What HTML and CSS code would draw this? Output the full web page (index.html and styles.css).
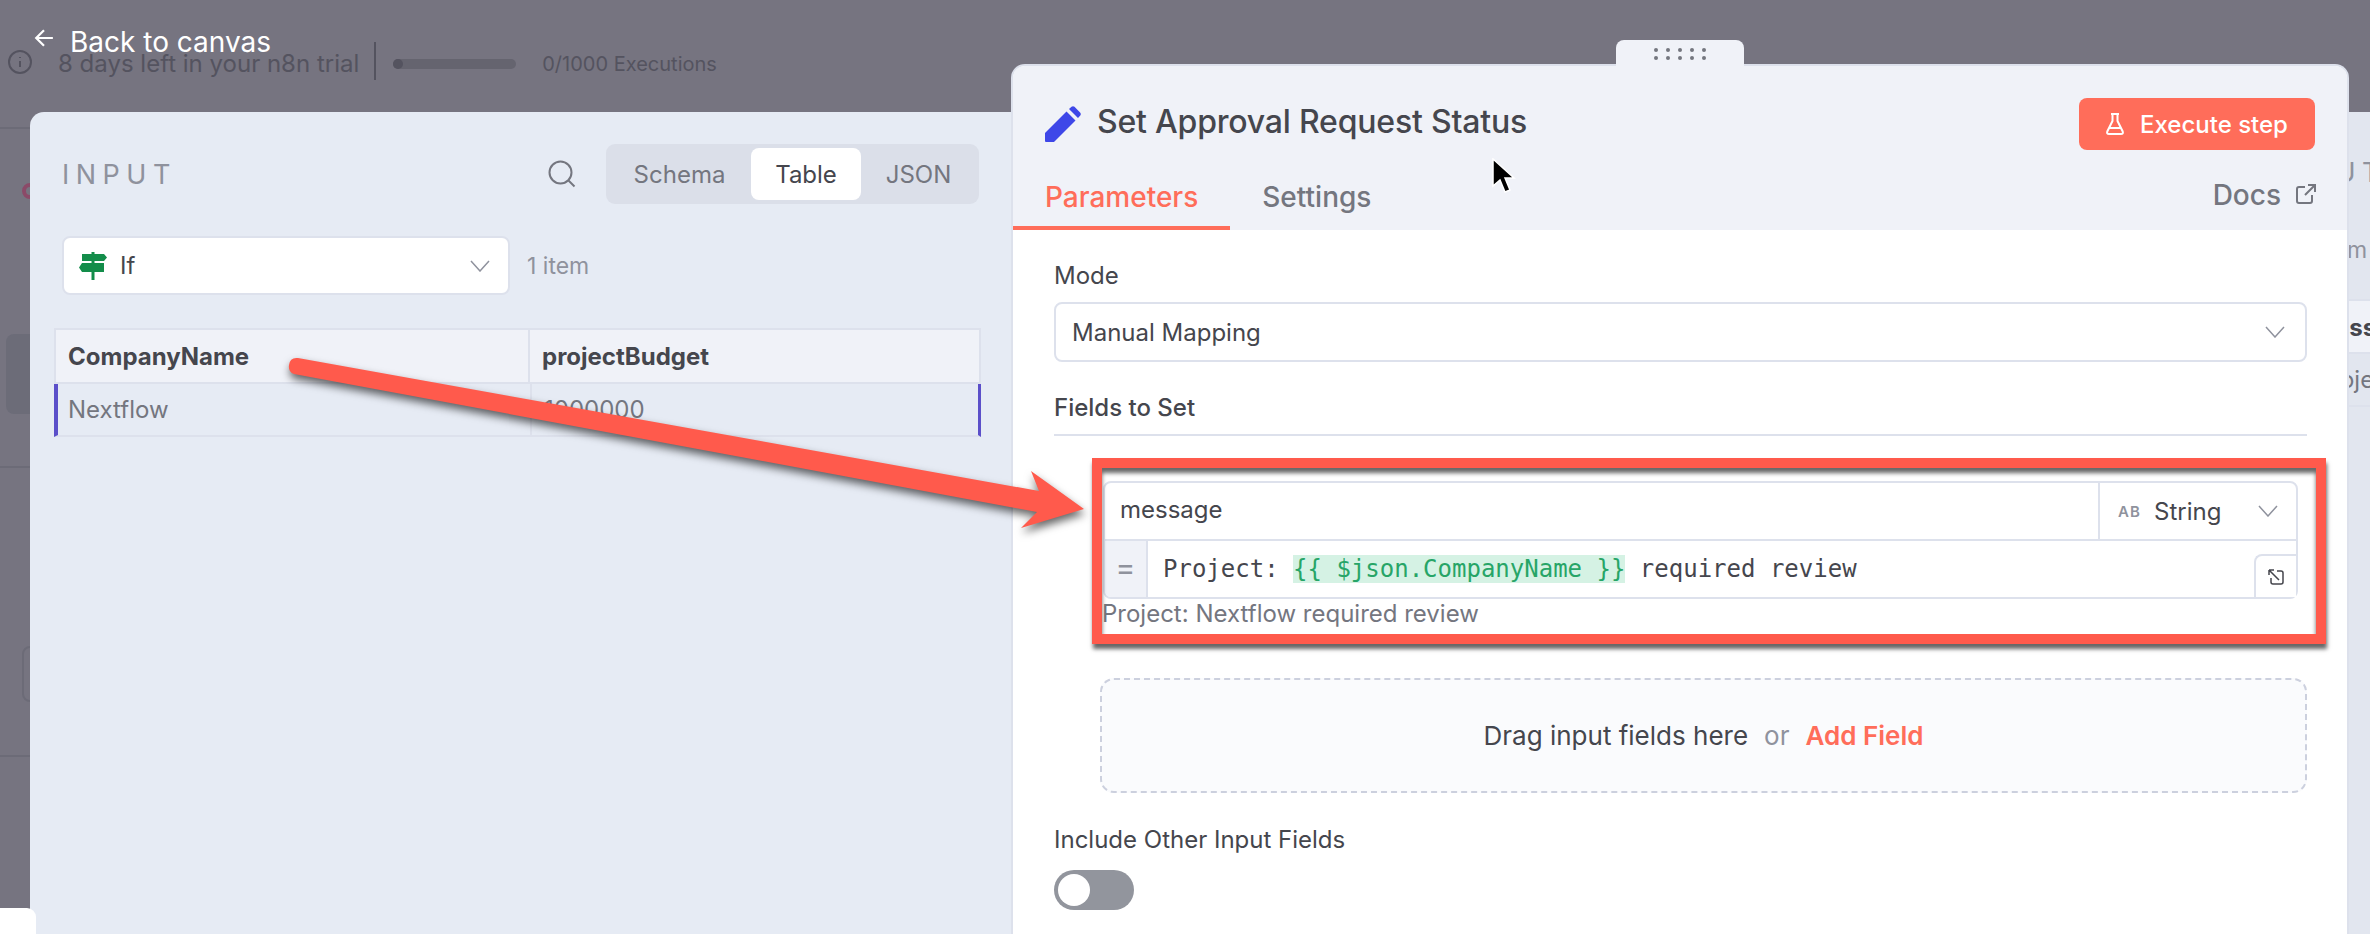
FILE: index.html
```html
<!DOCTYPE html>
<html lang="en">

    <head>
        <meta charset="UTF-8">
        <meta name="viewport" content="width=device-width, initial-scale=1.0">
        <title>Set Approval Request Status</title>
        <link rel="stylesheet" href="styles.css">
    </head>

    <body>
        <div class="page">
            <!-- dimmed editor behind the modal -->
            <div class="backdrop">
                <div class="trial-bar">
                    <svg class="info-icon" viewBox="0 0 24 24"><circle cx="12" cy="12" r="11"/><path d="M12 11v6M12 7v1"/></svg>
                    <span class="trial-text">8 days left in your n8n trial</span>
                    <span class="trial-sep"></span>
                    <span class="trial-progress"><span class="trial-progress-dot"></span></span>
                    <span class="trial-count">0/1000 Executions</span>
                </div>
                <span class="bg-ring"></span>
                <span class="bg-card"></span>
                <div class="bg-line bg-line-first"></div>
                <span class="bg-box"></span>
                <div class="bg-line bg-line-second"></div>
            </div>

            <div class="ndv">
                <a class="back-link" href="#">
                    <svg viewBox="0 0 18 18"><path d="M17 9H2M9 2 2 9l7 7"/></svg>
                    Back to canvas
                </a>

                <section class="input-panel">
                    <div class="input-head">
                        <span class="panel-title">INPUT</span>
                        <svg class="search-icon" viewBox="0 0 28 28"><circle cx="12.500" cy="12.500" r="11"/><path d="m20.500 20.500 6 6"/></svg>
                        <div class="mode-tabs">
                            <span class="mode-tab">Schema</span>
                            <span class="mode-tab active">Table</span>
                            <span class="mode-tab">JSON</span>
                        </div>
                    </div>
                    <div class="source-row">
                        <div class="source-select">
                            <svg class="if-icon" viewBox="0 0 28 28">
                                <path d="M12.500 0h3v2H25l3 3.500L25 9H3V2h9.500zM12.500 9h3v2H25v9H3l-3-4.500L3 11h9.500zM12.500 20h3v8h-3z"/>
                            </svg>
                            <span class="source-name">If</span>
                            <svg class="chevron" viewBox="0 0 20 12"><path d="m1 1 9 10 9-10"/></svg>
                        </div>
                        <span class="item-count">1 item</span>
                    </div>
                    <table class="data-table">
                        <thead>
                            <tr>
                                <th class="col-company">CompanyName</th>
                                <th>projectBudget</th>
                            </tr>
                        </thead>
                        <tbody>
                            <tr>
                                <td>Nextflow</td>
                                <td>1000000</td>
                            </tr>
                        </tbody>
                    </table>
                </section>

                <section class="main-panel">
                    <div class="drag-handle">
                        <span></span><span></span><span></span><span></span><span></span>
                        <span></span><span></span><span></span><span></span><span></span>
                    </div>
                    <header class="main-head">
                        <div class="title-row">
                            <svg class="pencil-icon" viewBox="0 0 36 36">
                                <path d="M0 27 21.500 5.500 30.500 14.500 9.500 35.500Q9 36 8 36H1Q0 36 0 35ZM24 3 26.500.700Q28 -.400 29.500.700L35.300 6.700Q36.300 8 35.300 9.500L33 12Z"/>
                            </svg>
                            <h1>Set Approval Request Status</h1>
                            <button class="execute-btn">
                                <svg viewBox="0 0 18 22"><path d="M5 1h8M6.500 1v7L1.300 18.500Q.500 21 3 21h12q2.500 0 1.700-2.500L11.500 8V1M3.500 15h11"/></svg>
                                Execute step
                            </button>
                        </div>
                        <nav class="main-tabs">
                            <a class="main-tab active" href="#">Parameters</a>
                            <a class="main-tab" href="#">Settings</a>
                            <a class="docs-link" href="#">
                                Docs
                                <svg viewBox="0 0 20 20"><path d="M9 3H3Q1 3 1 5v12q0 2 2 2h11q2 0 2-2v-6M9 11 19 1M12 1h7v7"/></svg>
                            </a>
                        </nav>
                    </header>

                    <div class="params">
                        <label class="param-label">Mode</label>
                        <div class="mode-select">
                            <span>Manual Mapping</span>
                            <svg class="chevron" viewBox="0 0 20 12"><path d="m1 1 9 10 9-10"/></svg>
                        </div>

                        <div class="fields-label">Fields to Set</div>

                        <div class="assignment">
                            <div class="assignment-box">
                                <div class="assignment-top">
                                    <span class="field-name">message</span>
                                    <div class="type-select">
                                        <span class="type-badge">AB</span>
                                        <span class="type-name">String</span>
                                        <svg class="chevron" viewBox="0 0 20 12"><path d="m1 1 9 10 9-10"/></svg>
                                    </div>
                                </div>
                                <div class="assignment-bottom">
                                    <span class="equals">=</span>
                                    <code class="expression">Project: <span class="expr-token">{{ $json.CompanyName }}</span> required review</code>
                                    <span class="expand-btn">
                                        <svg viewBox="0 0 16 16"><path d="M1 1l10 10M1 1v5M1 1h5M9 2h4q2 0 2 2v9q0 2-2 2H5q-2 0-2-2V9"/></svg>
                                    </span>
                                </div>
                            </div>
                            <div class="resolved">Project: Nextflow required review</div>
                            <div class="callout-frame"></div>
                        </div>

                        <div class="drop-zone">
                            <span class="drop-text">Drag input fields here</span>
                            <span class="drop-or">or</span>
                            <a class="add-field" href="#">Add Field</a>
                        </div>

                        <label class="param-label include-label">Include Other Input Fields</label>
                        <div class="toggle"><span class="toggle-knob"></span></div>
                    </div>
                </section>

                <section class="output-panel">
                    <span class="output-title">OUTPUT</span>
                    <span class="output-count">1 item</span>
                    <div class="output-head"><span>message</span></div>
                    <div class="output-row"><span>Project: Nextflow required review</span></div>
                </section>
            </div>

            <span class="corner-card"></span>

            <!-- annotation drawn on top of the screenshot -->
            <svg class="callout-arrow" viewBox="0 0 2370 934">
                <path d="M298 358 1039 491 1031 471 1084 509 1021 528 1037 512 294 374Q288 372 289 365 290 357 298 358Z"/>
            </svg>

            <svg class="mouse-cursor" viewBox="0 0 26 36">
                <path d="M2 1v27l7-6 5 12 5-2-5-12h9z"/>
            </svg>
        </div>
    </body>

</html>
```

FILE: styles.css
```css
:root {
    --coral: #ff6d5a;
    --callout: #ff5a4c;
    --text-dark: #45464d;
    --text-mid: #74767f;
    --text-light: #8f929d;
    --line: #dde1ec;
    --panel-head: #f0f2f8;
    --panel-input: #e6ebf4;
    --panel-output: #e2e6ef;
    --dim: #767480;
    --dim-text: #54535f;
    --dim-line: #6c6b77;
}

*,
*::before,
*::after {
    box-sizing: border-box;
}

body {
    margin: 0;
    font-family: 'Inter', 'Liberation Sans', sans-serif;
    color: var(--text-dark);
}

a {
    text-decoration: none;
}

.page {
    position: relative;
    width: 2370px;
    height: 934px;
    overflow: hidden;
    background: var(--dim);
}

/* Backdrop */
.backdrop {
    position: absolute;
    inset: 0;
    display: flex;
    flex-direction: column;
}

.trial-bar {
    display: flex;
    align-items: flex-start;
    height: 129px;
    padding: 42px 0 1px 8px;
    border-bottom: 2px solid var(--dim-line);
    color: var(--dim-text);
}

.info-icon {
    width: 24px;
    height: 24px;
    margin-top: 8px;
    fill: none;
    stroke: var(--dim-text);
    stroke-width: 2;
}

.trial-text {
    margin-left: 26px;
    margin-top: 7px;
    font-size: 24px;
    line-height: 30px;
    white-space: nowrap;
}

.trial-sep {
    width: 2px;
    height: 38px;
    margin-left: 15px;
    background: var(--dim-text);
}

.trial-progress {
    display: block;
    width: 123px;
    height: 10px;
    margin: 17px 0 0 17px;
    background: #65646f;
    border-radius: 5px;
}

.trial-progress-dot {
    display: block;
    width: 10px;
    height: 10px;
    border-radius: 50%;
    background: var(--dim-text);
}

.trial-count {
    margin-left: 26px;
    margin-top: 9px;
    font-size: 20px;
    line-height: 26px;
    white-space: nowrap;
}

.bg-ring {
    width: 16px;
    height: 16px;
    margin: 54px 0 0 22px;
    border: 4px solid #8b4a68;
    border-radius: 50%;
}

.bg-card {
    width: 60px;
    height: 80px;
    margin: 135px 0 0 6px;
    background: #6c6c78;
    border-radius: 8px;
}

.bg-line {
    height: 2px;
    background: var(--dim-line);
}

.bg-line-first {
    margin-top: 52px;
}

.bg-box {
    width: 60px;
    height: 56px;
    margin: 178px 0 0 22px;
    border: 2px solid var(--dim-line);
    border-radius: 8px;
}

.bg-line-second {
    margin-top: 53px;
}

.corner-card {
    position: absolute;
    left: 0;
    bottom: 0;
    width: 36px;
    height: 26px;
    background: white;
    border-radius: 0 9px 0 0;
}

/* Modal */
.ndv {
    position: absolute;
    inset: 0;
    display: flex;
    align-items: flex-start;
    padding-left: 30px;
}

.back-link {
    position: absolute;
    left: 34px;
    top: 27px;
    display: flex;
    align-items: center;
    gap: 16px;
    color: white;
    font-size: 28px;
    line-height: 30px;
}

.back-link svg {
    width: 20px;
    height: 20px;
    margin-top: -8px;
    fill: none;
    stroke: white;
    stroke-width: 2;
}

/* Input panel */
.input-panel {
    width: 981px;
    height: 822px;
    margin-top: 112px;
    padding: 32px 32px 0 24px;
    background: var(--panel-input);
    border-radius: 14px 0 0 0;
}

.input-head {
    display: flex;
    align-items: center;
    padding-left: 8px;
}

.panel-title {
    font-size: 27px;
    font-weight: 400;
    letter-spacing: 6.500px;
    color: var(--text-light);
}

.search-icon {
    width: 28px;
    height: 28px;
    margin-left: auto;
    fill: none;
    stroke: var(--text-mid);
    stroke-width: 2;
}

.mode-tabs {
    display: flex;
    height: 60px;
    width: 373px;
    margin-left: 30px;
    padding: 4px 0;
    background: #dbdfe9;
    border-radius: 9px;
}

.mode-tab {
    display: flex;
    align-items: center;
    justify-content: center;
    width: 145px;
    padding-left: 2px;
    font-size: 24px;
    color: var(--text-mid);
    border-radius: 8px;
}

.mode-tab.active {
    width: 110px;
    padding-left: 0;
    background: white;
    color: var(--text-dark);
}

.mode-tab:last-child {
    width: 118px;
    padding: 0 3px 0 0;
}

.source-row {
    display: flex;
    align-items: center;
    margin: 32px 0 0 8px;
}

.source-select {
    display: flex;
    align-items: center;
    width: 448px;
    height: 59px;
    padding: 0 18px 0 15px;
    background: white;
    border: 2px solid var(--line);
    border-radius: 8px;
}

.if-icon {
    width: 28px;
    height: 28px;
    fill: #138d4a;
}

.source-name {
    margin-left: 13px;
    font-size: 24px;
}

.chevron {
    width: 20px;
    height: 12px;
    margin-left: auto;
    fill: none;
    stroke: var(--text-light);
    stroke-width: 1.500;
}

.item-count {
    margin-left: 17px;
    font-size: 23px;
    color: var(--text-light);
}

.data-table {
    width: 927px;
    margin-top: 33px;
    border-collapse: separate;
    border-spacing: 0;
    table-layout: fixed;
    font-size: 24px;
}

.data-table th {
    height: 56px;
    padding: 0 12px;
    text-align: left;
    font-weight: 700;
    background: var(--panel-head);
    border: 2px solid var(--line);
}

.data-table .col-company {
    width: 476px;
}

.data-table th + th {
    border-left: none;
}

.data-table td {
    height: 53px;
    padding: 0 12px 0 10px;
    color: var(--text-mid);
    border-bottom: 2px solid var(--line);
    border-left: 4px solid #5b4fc9;
}

.data-table td + td {
    padding-left: 12px;
    border-left: 2px solid var(--line);
    border-right: 3px solid #5b4fc9;
}

/* Main panel */
.main-panel {
    position: relative;
    flex: none;
    width: 1338px;
    height: 870px;
    margin-top: 64px;
    background: white;
    border: 2px solid var(--line);
    border-bottom: none;
    border-radius: 14px 14px 0 0;
}

.drag-handle {
    position: absolute;
    left: 603px;
    top: -26px;
    display: grid;
    grid-template-columns: repeat(5, 4px);
    gap: 4px 8px;
    justify-content: center;
    align-content: center;
    width: 128px;
    height: 26px;
    padding-top: 2px;
    background: var(--panel-head);
    border-radius: 8px 8px 0 0;
}

.drag-handle span {
    width: 4px;
    height: 4px;
    border-radius: 50%;
    background: var(--text-mid);
}

.main-head {
    height: 164px;
    background: var(--panel-head);
    border-radius: 12px 12px 0 0;
}

.title-row {
    display: flex;
    align-items: center;
    height: 84px;
    padding: 32px 32px 0 32px;
}

.pencil-icon {
    width: 36px;
    height: 36px;
    fill: #3e47e8;
}

.title-row h1 {
    margin: 0 0 5px 16px;
    font-size: 32px;
    font-weight: 500;
    letter-spacing: -0.2px;
    color: var(--text-dark);
}

.execute-btn {
    display: flex;
    align-items: center;
    gap: 16px;
    height: 52px;
    width: 236px;
    margin-left: auto;
    padding: 0 0 0 27px;
    font-family: inherit;
    font-size: 24px;
    font-weight: 500;
    color: white;
    background: var(--coral);
    border: none;
    border-radius: 8px;
}

.execute-btn svg {
    width: 18px;
    height: 22px;
    fill: none;
    stroke: white;
    stroke-width: 2;
}

.main-tabs {
    display: flex;
    height: 80px;
    padding-right: 32px;
}

.main-tab {
    height: 80px;
    padding: 32px 32px 14px;
    font-size: 28px;
    font-weight: 500;
    line-height: 30px;
    color: var(--text-mid);
}

.main-tab.active {
    color: var(--coral);
    border-bottom: 4px solid var(--coral);
}

.docs-link {
    display: flex;
    gap: 15px;
    margin-left: auto;
    padding-top: 30px;
    height: 60px;
    font-size: 28px;
    font-weight: 500;
    line-height: 30px;
    color: var(--text-mid);
}

.docs-link svg {
    width: 20px;
    height: 20px;
    margin: 4px -1px 0 0;
    fill: none;
    stroke: var(--text-mid);
    stroke-width: 2;
}

.params {
    padding: 31px 40px 0 41px;
}

.param-label {
    display: block;
    font-size: 24px;
    line-height: 30px;
}

.mode-select {
    display: flex;
    align-items: center;
    height: 60px;
    margin-top: 11px;
    padding: 0 20px 0 16px;
    font-size: 24px;
    border: 2px solid var(--line);
    border-radius: 8px;
}

.fields-label {
    margin-top: 31px;
    padding-bottom: 11px;
    font-size: 24px;
    font-weight: 500;
    line-height: 30px;
    border-bottom: 2px solid var(--line);
}

.assignment {
    position: relative;
    margin: 45px 9px 0 49px;
}

.assignment-box {
    border: 2px solid var(--line);
    border-radius: 8px;
}

.assignment-top {
    display: flex;
    height: 58px;
    border-bottom: 2px solid var(--line);
}

.field-name {
    flex: 1;
    padding-left: 15px;
    font-size: 24px;
    line-height: 54px;
}

.type-select {
    display: flex;
    align-items: center;
    width: 198px;
    padding: 0 18px;
    border-left: 2px solid var(--line);
}

.type-badge {
    width: 36px;
    font-size: 15px;
    font-weight: 600;
    letter-spacing: 1px;
    color: var(--text-light);
}

.type-name {
    font-size: 24px;
}

.assignment-bottom {
    position: relative;
    display: flex;
    align-items: center;
    height: 56px;
}

.equals {
    width: 43px;
    height: 56px;
    font-size: 30px;
    line-height: 52px;
    text-align: center;
    color: var(--text-light);
    background: var(--panel-head);
    border-right: 2px solid var(--line);
    border-radius: 0 0 0 6px;
}

.expression {
    padding-left: 15px;
    font-family: 'DejaVu Sans Mono', 'Liberation Mono', monospace;
    font-size: 24px;
    white-space: pre;
}

.expr-token {
    display: inline-block;
    height: 28px;
    line-height: 28px;
    color: #27a567;
    background: #d5f2e4;
}

.expand-btn {
    position: absolute;
    right: 0;
    bottom: 0;
    display: flex;
    align-items: center;
    justify-content: center;
    width: 42px;
    height: 43px;
    background: white;
    border-left: 2px solid var(--line);
    border-top: 2px solid var(--line);
    border-radius: 8px 0 0 0;
}

.expand-btn svg {
    width: 16px;
    height: 16px;
    fill: none;
    stroke: var(--text-dark);
    stroke-width: 1.500;
}

.resolved {
    margin: 1px 0 0 -1px;
    font-size: 24px;
    line-height: 28px;
    color: var(--text-mid);
}

.callout-frame {
    position: absolute;
    inset: -23px -28px -16px -11px;
    border: 10px solid var(--callout);
    box-shadow: 1px 5px 4px rgba(0, 0, 0, 0.6), inset 0 5px 4px rgba(0, 0, 0, 0.6);
    pointer-events: none;
}

.drop-zone {
    display: flex;
    align-items: center;
    justify-content: center;
    gap: 16px;
    height: 115px;
    margin: 50px 0 0 46px;
    font-size: 26px;
    background: #fafbfd;
    border: 2px dashed #ccd0de;
    border-radius: 14px;
}

.drop-or {
    color: var(--text-light);
}

.add-field {
    font-weight: 600;
    color: var(--coral);
}

.include-label {
    margin-top: 32px;
}

.toggle {
    display: flex;
    align-items: center;
    width: 80px;
    height: 40px;
    margin-top: 15px;
    padding-left: 4px;
    background: #92959d;
    border-radius: 20px;
}

.toggle-knob {
    width: 32px;
    height: 32px;
    background: white;
    border-radius: 50%;
}

/* Output panel, mostly cut off by the window edge */
.output-panel {
    flex: 1;
    display: flex;
    flex-direction: column;
    height: 822px;
    margin-top: 112px;
    overflow: hidden;
    background: var(--panel-output);
    white-space: nowrap;
}

.output-title {
    margin: 44px 0 0 -115px;
    font-size: 27px;
    font-weight: 400;
    letter-spacing: 6.500px;
    color: var(--text-light);
}

.output-count {
    margin: 47px 0 0 -44px;
    font-size: 23px;
    color: var(--text-light);
}

.output-head {
    height: 55px;
    margin-top: 35px;
    font-size: 24px;
    font-weight: 700;
    line-height: 53px;
    background: var(--panel-head);
    border-top: 2px solid var(--line);
    border-bottom: 2px solid var(--line);
}

.output-head span {
    margin-left: -36px;
}

.output-row {
    height: 53px;
    font-size: 24px;
    line-height: 51px;
    color: var(--text-mid);
    border-bottom: 2px solid var(--line);
}

.output-row span {
    margin-left: -33px;
}

/* Annotation and pointer */
.callout-arrow {
    position: absolute;
    inset: 0;
    width: 2370px;
    height: 934px;
    fill: var(--callout);
    filter: drop-shadow(1px 5px 4px rgba(0, 0, 0, 0.6));
    pointer-events: none;
}

.mouse-cursor {
    position: absolute;
    left: 1491px;
    top: 158px;
    width: 26px;
    height: 36px;
    fill: black;
    stroke: white;
    stroke-width: 1.500;
}
```
